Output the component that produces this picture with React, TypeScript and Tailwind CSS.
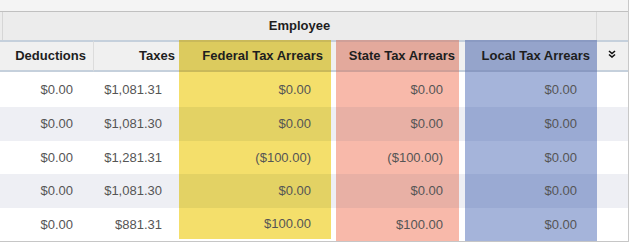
import React from "react";

type Tint = {
  head: string;
  headBorder: string;
  body: string;
  stripe: string;
};

const yellow: Tint = { head: "bg-[#dccb5e]", headBorder: "border-[#c9b95a]", body: "bg-[#f4df6b]", stripe: "bg-[#e3d264]" };
const red: Tint = { head: "bg-[#e3a99c]", headBorder: "border-[#cf9f98]", body: "bg-[#f8b9aa]", stripe: "bg-[#e8b0a5]" };
const blue: Tint = { head: "bg-[#95a4cb]", headBorder: "border-[#8a9ac2]", body: "bg-[#a5b4da]", stripe: "bg-[#9aaad3]" };

const rows = [
  { d: "$0.00", t: "$1,081.31", f: "$0.00", s: "$0.00", l: "$0.00", h: "h-[35px]" },
  { d: "$0.00", t: "$1,081.30", f: "$0.00", s: "$0.00", l: "$0.00", h: "h-[34px]" },
  { d: "$0.00", t: "$1,281.31", f: "($100.00)", s: "($100.00)", l: "$0.00", h: "h-[33px]" },
  { d: "$0.00", t: "$1,081.30", f: "$0.00", s: "$0.00", l: "$0.00", h: "h-[34px]" },
  { d: "$0.00", t: "$881.31", f: "$100.00", s: "$100.00", l: "$0.00", h: "h-[33px]" },
];

const grid = "grid grid-cols-[93px_86px_152px_5px_123px_6px_132px_31px]";

function ChevronsDown() {
  return (
    <svg width="8" height="8" viewBox="0 0 8 8" fill="none" stroke="#111" strokeWidth="1.6">
      <path d="M1 1 L4 3.5 L7 1" />
      <path d="M1 4.5 L4 7 L7 4.5" />
    </svg>
  );
}

export default function App() {
  return (
    <div className="w-[635px] h-[248px] bg-white" style={{ fontFamily: '"Liberation Sans", Arial, sans-serif' }}>
      <div className="w-[629px] border-r border-[#c8c8c8]">
        <div className="h-[12px] bg-[#f4f4f4] border-b border-[#c0c0c0]" />
        <div className="flex h-[28px] bg-[#ececec]">
          <div className="w-[3px] border-r border-[#d6d6d6]" />
          <div className="w-[594px] border-r border-[#d9d9d9] flex items-center justify-center text-[13px] font-bold text-[#1e1e1e]">
            Employee
          </div>
        </div>
        <div className={`${grid} h-[32px] text-[13px] font-bold text-[#1e1e1e]`}>
          <div className="bg-[#f0f0f0] border-y-2 border-[#c5d0dc] flex items-center justify-end pr-[7px]">Deductions</div>
          <div className="bg-[#f0f0f0] border-y-2 border-[#c5d0dc] border-l border-l-[#dcdcdc] flex items-center justify-end pr-[4px]">Taxes</div>
          <div className={`${yellow.head} border-y-2 ${yellow.headBorder} flex items-center justify-end pr-[8px]`}>Federal Tax Arrears</div>
          <div className="bg-[#f0f0f0] border-y-2 border-[#c5d0dc]" />
          <div className={`${red.head} border-y-2 ${red.headBorder} flex items-center justify-end pr-[4px]`}>State Tax Arrears</div>
          <div className="bg-[#f0f0f0] border-y-2 border-[#c5d0dc]" />
          <div className={`${blue.head} border-y-2 ${blue.headBorder} flex items-center justify-end pr-[7px]`}>Local Tax Arrears</div>
          <div className="bg-[#f0f0f0] border-y-2 border-[#c5d0dc] flex items-center justify-center pr-[1px] pb-[4px]">
            <ChevronsDown />
          </div>
        </div>
        <div className="border-b border-[#c6c6c6]">
          {rows.map((r, i) => {
            const striped = i % 2 === 1;
            const base = striped ? "bg-[#eeeff4]" : "bg-white";
            const last = i === rows.length - 1;
            return (
              <div key={i} className={`${grid} ${r.h} text-[13px] text-[#555555]`}>
                <div className={`${base} flex items-center justify-end pr-[20px]`}>{r.d}</div>
                <div className={`${base} flex items-center justify-end pr-[17px]`}>{r.t}</div>
                <div className={`${base} ${last ? "pb-[2px]" : ""}`}>
                  <div className={`h-full ${striped ? yellow.stripe : yellow.body} flex items-center justify-end pr-[20px]`}>{r.f}</div>
                </div>
                <div className={base} />
                <div className={`${striped ? red.stripe : red.body} flex items-center justify-end pr-[16px]`}>{r.s}</div>
                <div className={base} />
                <div className={`${striped ? blue.stripe : blue.body} flex items-center justify-end pr-[20px]`}>{r.l}</div>
                <div className={base} />
              </div>
            );
          })}
        </div>
      </div>
    </div>
  );
}
